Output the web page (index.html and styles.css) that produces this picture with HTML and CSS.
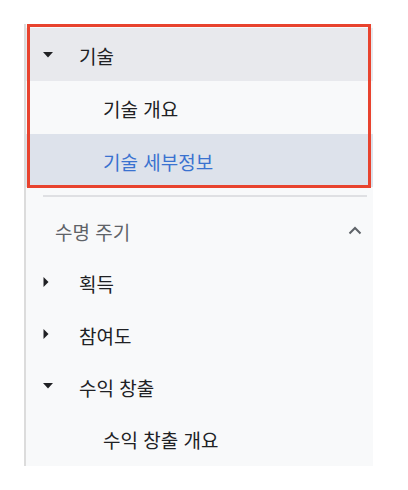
FILE: index.html
```html
<!DOCTYPE html>
<html lang="ko">
<head>
<meta charset="utf-8">
<link rel="stylesheet" href="styles.css">
</head>
<body>
<nav class="panel">
  <div class="group">
    <div class="row row-l1 row-open">
      <span class="caret"><svg width="10" height="6" viewBox="0 0 10 6"><path d="M0 0h10L5 5.5z" fill="#202124"/></svg></span>
      <span class="label">기술</span>
    </div>
    <div class="row row-l2"><span class="label">기술 개요</span></div>
    <div class="row row-l2 row-selected"><span class="label">기술 세부정보</span></div>
    <div class="highlight"></div>
  </div>
  <div class="divider"></div>
  <div class="row row-section">
    <span class="label">수명 주기</span>
    <span class="chevron"><svg width="14" height="9" viewBox="0 0 14 9"><path d="M1.5 7.5L7 2l5.5 5.5" fill="none" stroke="#5f6368" stroke-width="2"/></svg></span>
  </div>
  <div class="row row-l1">
    <span class="caret"><svg width="6" height="10" viewBox="0 0 6 10"><path d="M0.5 0v10L5.5 5z" fill="#202124"/></svg></span>
    <span class="label">획득</span>
  </div>
  <div class="row row-l1">
    <span class="caret"><svg width="6" height="10" viewBox="0 0 6 10"><path d="M0.5 0v10L5.5 5z" fill="#202124"/></svg></span>
    <span class="label">참여도</span>
  </div>
  <div class="row row-l1">
    <span class="caret"><svg width="10" height="6" viewBox="0 0 10 6"><path d="M0 0h10L5 5.5z" fill="#202124"/></svg></span>
    <span class="label">수익 창출</span>
  </div>
  <div class="row row-l2"><span class="label">수익 창출 개요</span></div>
</nav>
</body>
</html>
```
FILE: styles.css
```css
html, body {
  margin: 0;
  padding: 0;
  background: #ffffff;
}
body {
  padding-top: 24px;
  font-family: "Noto Sans CJK KR", "Noto Sans", sans-serif;
  color: #202124;
}
.panel {
  position: relative;
  margin-left: 24px;
  width: 347px;
  border-left: 2px solid #dcdcdc;
  background: #f8f9fa;
  padding-top: 4px;
  padding-bottom: 2px;
}
.group {
  display: flex;
  flex-direction: column;
}
.row {
  display: flex;
  align-items: center;
  height: 53px;
  font-size: 19px;
  font-weight: 400;
  line-height: 1;
}
.row-l1 {
  padding-left: 17px;
}
.row-l1 .caret {
  width: 36px;
  display: flex;
  align-items: center;
}
.row-l1 .caret svg {
  display: block;
}
.row-l2 {
  padding-left: 77px;
}
.row-open {
  background: #e8e9ed;
}
.row-selected {
  background: #dde2eb;
  color: #3a72d0;
}
.highlight {
  position: absolute;
  top: 0;
  left: 1px;
  width: 338px;
  height: 158px;
  border: 3px solid #e8432e;
  pointer-events: none;
}
.divider {
  height: 2px;
  background: #dfe0e3;
  margin: 8px 6px 7px 17px;
}
.row-section {
  height: 52px;
  padding-left: 29px;
  padding-right: 11px;
  justify-content: space-between;
  color: #5f6368;
}
.row-section ~ .row {
  height: 52px;
}
.chevron svg {
  display: block;
}
.label {
  display: block;
  padding-top: 2px;
}
```
